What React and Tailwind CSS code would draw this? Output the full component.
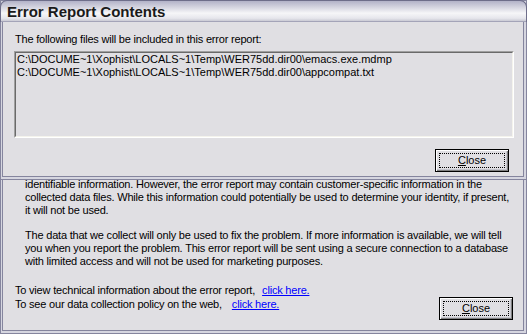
export default function App() {
  const btn =
    "relative w-[74px] h-[23px] border border-black bg-[#e0dfe3] shadow-[inset_1px_1px_0_#ffffff,inset_-1px_-1px_0_#808080,inset_-2px_-2px_0_#c4c4cc] flex items-center justify-center leading-[13px] tracking-normal";
  return (
    <div className="relative w-[527px] h-[334px] overflow-hidden bg-[#b8b8c8] font-['Liberation_Sans',Arial,sans-serif] text-[11px] leading-[13px] text-black tracking-[-0.2px]">
      {/* Background window */}
      <div className="h-full border border-[#85859e] bg-[#d6d6e0] pt-px pl-px pr-[2px] pb-[2px]">
        <div className="h-full border border-[#85859e] bg-[#e0dfe3] pt-[175px] flex flex-col">
          <div className="pl-[22px] whitespace-nowrap">
            <p>
              identifiable information. However, the error report may contain customer-specific information in the
              <br />
              collected data files. While this information could potentially be used to determine your identity, if present,
              <br />
              it will not be used.
            </p>
            <p className="mt-[12px]">
              The data that we collect will only be used to fix the problem. If more information is available, we will tell
              <br />
              you when you report the problem. This error report will be sent using a secure connection to a database
              <br />
              with limited access and will not be used for marketing purposes.
            </p>
          </div>
          <div className="mt-[16px] flex items-start justify-between pl-[12px] pr-[10px] whitespace-nowrap">
            <div>
              <div>
                To view technical information about the error report,
                <a className="ml-[7px] text-[#0000ff] underline">click here.</a>
              </div>
              <div className="mt-px">
                To see our data collection policy on the web,
                <a className="ml-[10px] text-[#0000ff] underline">click here.</a>
              </div>
            </div>
            <button className={btn + " mt-[13px]"}>
              <span className="absolute inset-[3px] border border-dotted border-black" />
              <span>
                <span className="underline">C</span>lose
              </span>
            </button>
          </div>
        </div>
      </div>

      {/* Foreground window: Error Report Contents */}
      <div className="absolute top-0 left-0 w-[527px] h-[180px] flex flex-col">
        <div className="h-[22px] shrink-0 rounded-t-[7px] border-t border-x border-[#6e6e8a] bg-[linear-gradient(to_bottom,#b2b2c8_0%,#cfcfdc_25%,#f6f6f8_58%,#e6e6ec_82%,#c0c0cc_100%)] shadow-[inset_0_-1px_0_#a4a4b8] pt-px pl-[6px] text-[15px] leading-[20px] font-bold tracking-normal text-[#1a1a1a]">
          Error Report Contents
        </div>
        <div className="flex-1 border-x border-b border-[#85859e] bg-[#d6d6e0] pl-px pr-[2px] pb-[2px]">
          <div className="h-full border-x border-b border-[#85859e] bg-[#e0dfe3] pt-[11px] pl-[11px] flex flex-col">
            <div className="ml-px whitespace-nowrap">
              The following files will be included in this error report:
            </div>
            <div className="mt-[5px] w-[500px] h-[87px] border border-t-[#a0a0a0] border-l-[#a0a0a0] border-b-white border-r-white">
              <div className="h-full border border-t-[#6a6a6a] border-l-[#6a6a6a] border-b-[#f4f3ec] border-r-[#f4f3ec] pl-px tracking-normal whitespace-nowrap">
                <div>C:\DOCUME~1\Xophist\LOCALS~1\Temp\WER75dd.dir00\emacs.exe.mdmp</div>
                <div>C:\DOCUME~1\Xophist\LOCALS~1\Temp\WER75dd.dir00\appcompat.txt</div>
              </div>
            </div>
            <button className={btn + " mt-[11px] self-end mr-[14px]"}>
              <span className="absolute inset-[3px] border border-dotted border-black" />
              <span>
                <span className="underline">C</span>lose
              </span>
            </button>
          </div>
        </div>
      </div>
    </div>
  );
}
